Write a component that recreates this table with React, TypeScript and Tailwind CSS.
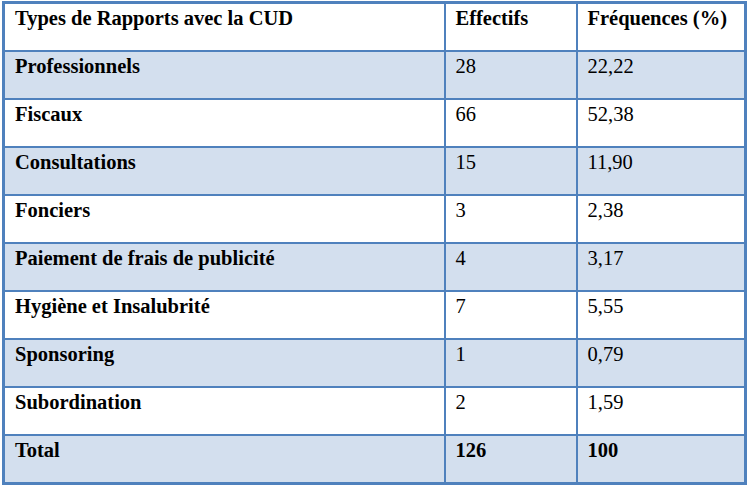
import React from 'react';

const rows: { label: string; n: string; pct: string; shaded: boolean }[] = [
  { label: 'Professionnels', n: '28', pct: '22,22', shaded: true },
  { label: 'Fiscaux', n: '66', pct: '52,38', shaded: false },
  { label: 'Consultations', n: '15', pct: '11,90', shaded: true },
  { label: 'Fonciers', n: '3', pct: '2,38', shaded: false },
  { label: 'Paiement de frais de publicité', n: '4', pct: '3,17', shaded: true },
  { label: 'Hygiène et Insalubrité', n: '7', pct: '5,55', shaded: false },
  { label: 'Sponsoring', n: '1', pct: '0,79', shaded: true },
  { label: 'Subordination', n: '2', pct: '1,59', shaded: false },
];

const cell = 'border-2 border-[#4f81bd] align-top pt-[3px] pl-[10px] text-left';

export default function App() {
  return (
    <div className="h-[486px] w-[750px] bg-white pl-[2px] pt-[1px] font-['Liberation_Serif','Times_New_Roman',serif] text-[20.5px] leading-[23px] text-black">
      <table className="w-[745px] border-collapse border-[3px] border-[#4f81bd]">
        <colgroup>
          <col className="w-[441px]" />
          <col className="w-[132px]" />
          <col />
        </colgroup>
        <thead>
          <tr className="h-[48px] bg-white">
            <th className={`${cell} font-bold`}>Types de Rapports avec la CUD</th>
            <th className={`${cell} font-bold`}>Effectifs</th>
            <th className={`${cell} font-bold`}>Fréquences (%)</th>
          </tr>
        </thead>
        <tbody>
          {rows.map((r) => (
            <tr key={r.label} className={`h-[48px] ${r.shaded ? 'bg-[#d3dfee]' : 'bg-white'}`}>
              <td className={`${cell} font-bold`}>{r.label}</td>
              <td className={cell}>{r.n}</td>
              <td className={cell}>{r.pct}</td>
            </tr>
          ))}
          <tr className="h-[49px] bg-[#d3dfee]">
            <td className={`${cell} font-bold`}>Total</td>
            <td className={`${cell} font-bold`}>126</td>
            <td className={`${cell} font-bold`}>100</td>
          </tr>
        </tbody>
      </table>
    </div>
  );
}
